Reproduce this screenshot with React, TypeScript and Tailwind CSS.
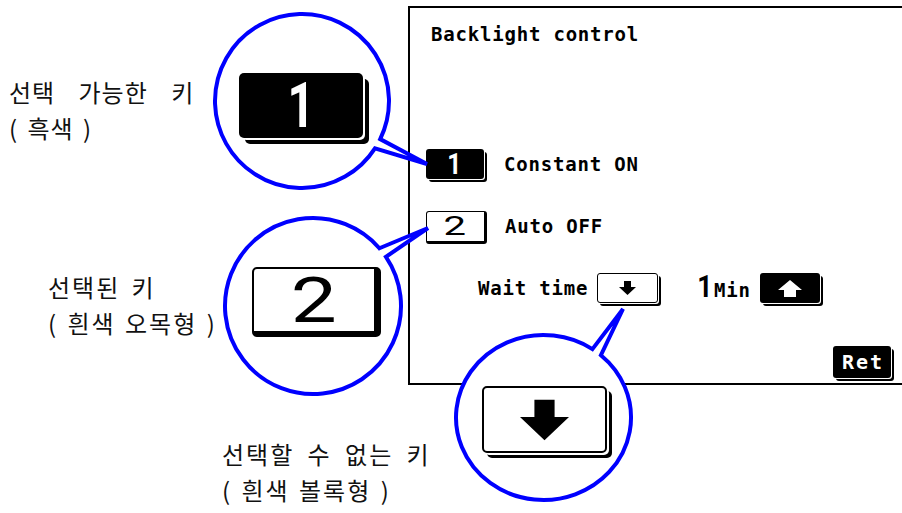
import React from "react";

function bubble(cx: number, cy: number, rx: number, ry: number, a1: number, a2: number, tx: number, ty: number) {
  const p = (a: number) => [cx + rx * Math.cos((a * Math.PI) / 180), cy + ry * Math.sin((a * Math.PI) / 180)];
  const [x1, y1] = p(a1);
  const [x2, y2] = p(a2);
  return `M ${x1} ${y1} L ${tx} ${ty} L ${x2} ${y2} A ${rx} ${ry} 0 1 1 ${x1} ${y1} Z`;
}

function DownArrow({ w, h, color }: { w: number; h: number; color: string }) {
  return (
    <svg width={w} height={h} viewBox="0 0 17 14" className="shrink-0">
      <polygon points="5,0 12,0 12,6 17,6 8.5,14 0,6 5,6" fill={color} />
    </svg>
  );
}

function UpArrow({ w, h, color }: { w: number; h: number; color: string }) {
  return (
    <svg width={w} height={h} viewBox="0 0 24 17" className="shrink-0">
      <polygon points="12,0 24,10 18,10 18,17 6,17 6,10 0,10" fill={color} />
    </svg>
  );
}

export default function App() {
  return (
    <div className="relative h-[513px] w-[902px] overflow-hidden bg-white">
      {/* LCD screen panel */}
      <div className="absolute left-[408px] top-[6px] h-[379px] w-[500px] border-2 border-black bg-white font-['DejaVu_Sans_Mono',monospace] text-[19px] font-bold tracking-[0.8px] text-black">
        <div className="flex flex-col pt-[15px]">
          <div className="ml-[21px] leading-[22px]">Backlight control</div>

          <div className="ml-[16px] mt-[104px] flex h-[30px] items-center">
            <div className="flex h-[30px] w-[58px] items-center justify-center rounded-[3px] bg-black shadow-[1px_1px_0_0_#fff,3px_3px_0_0_#000]">
              <span className="inline-block scale-x-[0.85] font-['Roboto',sans-serif] text-[29px] font-bold leading-none text-white">1</span>
            </div>
            <span className="ml-[20px] leading-[22px]">Constant ON</span>
          </div>

          <div className="ml-[16px] mt-[32px] flex h-[30px] items-center">
            <div className="flex h-[33px] w-[61px] items-center justify-center self-start rounded-[3px] border border-b-[3px] border-r-[3px] border-black bg-white">
              <span className="inline-block scale-x-[1.6] font-['Roboto',sans-serif] text-[25px] font-normal leading-none">2</span>
            </div>
            <span className="ml-[18px] leading-[22px]">Auto OFF</span>
          </div>

          <div className="ml-[68px] mt-[32px] flex h-[30px] items-center">
            <span className="leading-[22px]">Wait time</span>
            <div className="ml-[9px] flex h-[30px] w-[61px] items-center justify-center rounded-[3px] border border-black bg-white shadow-[1px_1px_0_0_#fff,3px_3px_0_0_#000]">
              <DownArrow w={17} h={14} color="#000" />
            </div>
            <span className="ml-[38px] flex items-baseline">
              <span className="inline-block scale-x-[0.85] font-['Roboto',sans-serif] text-[31px] font-bold leading-[22px] tracking-normal">1</span>
              <span className="leading-[22px]">Min</span>
            </span>
            <div className="ml-[9px] flex h-[30px] w-[60px] items-center justify-center rounded-[3px] bg-black shadow-[1px_1px_0_0_#fff,3px_3px_0_0_#000]">
              <UpArrow w={24} h={17} color="#fff" />
            </div>
          </div>

          <div className="mr-[15px] mt-[43px] flex justify-end">
            <div className="flex h-[32px] w-[58px] items-center justify-center rounded-[3px] bg-black pl-[2px] text-[20px] leading-none tracking-[2px] text-white shadow-[1px_1px_0_0_#fff,3px_3px_0_0_#000]">
              Ret
            </div>
          </div>
        </div>
      </div>

      {/* callout bubbles */}
      <svg className="pointer-events-none absolute left-0 top-0" width={902} height={513}>
        <path d={bubble(302, 101, 87, 87, 26, 33, 427, 164)} fill="#fff" stroke="#0000ff" strokeWidth={4} />
        <path d={bubble(313, 306, 88, 88, -41, -34, 428, 228)} fill="#fff" stroke="#0000ff" strokeWidth={4} />
        <path d={bubble(543.5, 417.5, 87.5, 82.5, -56, -49, 623, 309)} fill="#fff" stroke="#0000ff" strokeWidth={4} />
      </svg>

      {/* magnified keys */}
      <div className="absolute left-[239px] top-[73px] flex h-[65px] w-[124px] items-center justify-center rounded-[5px] bg-black shadow-[2px_2px_0_0_#fff,6px_6px_0_0_#000]">
        <span className="inline-block scale-x-[0.75] font-['Roboto',sans-serif] text-[63px] font-bold leading-none text-white">1</span>
      </div>
      <div className="absolute left-[252px] top-[267px] flex h-[70px] w-[129px] items-center justify-center rounded-[5px] border-2 border-b-[6px] border-r-[7px] border-black bg-white">
        <span className="inline-block scale-x-[1.3] font-['Roboto',sans-serif] text-[63px] font-normal leading-none text-black">2</span>
      </div>
      <div className="absolute left-[482px] top-[386px] flex h-[67px] w-[125px] items-center justify-center rounded-[5px] border-2 border-black bg-white shadow-[2px_2px_0_0_#fff,5px_5px_0_0_#000]">
        <DownArrow w={49} h={42} color="#000" />
      </div>

      {/* annotations */}
      <div className="absolute left-[9px] top-[74px] font-['Noto_Sans_CJK_KR',sans-serif] text-[24px] leading-[36px] tracking-[1px] text-[#111]">
        <div className="[word-spacing:17px]">선택 가능한 키</div>
        <div className="[word-spacing:3px]">( 흑색 )</div>
      </div>
      <div className="absolute left-[48px] top-[269px] font-['Noto_Sans_CJK_KR',sans-serif] text-[24px] leading-[36px] tracking-[2px] text-[#111]">
        <div className="[word-spacing:4px]">선택된 키</div>
        <div className="[word-spacing:2px]">( 흰색 오목형 )</div>
      </div>
      <div className="absolute left-[222px] top-[436px] font-['Noto_Sans_CJK_KR',sans-serif] text-[24px] leading-[36px] tracking-[2px] text-[#111]">
        <div className="[word-spacing:6px]">선택할 수 없는 키</div>
        <div className="[word-spacing:2px]">( 흰색 볼록형 )</div>
      </div>
    </div>
  );
}
